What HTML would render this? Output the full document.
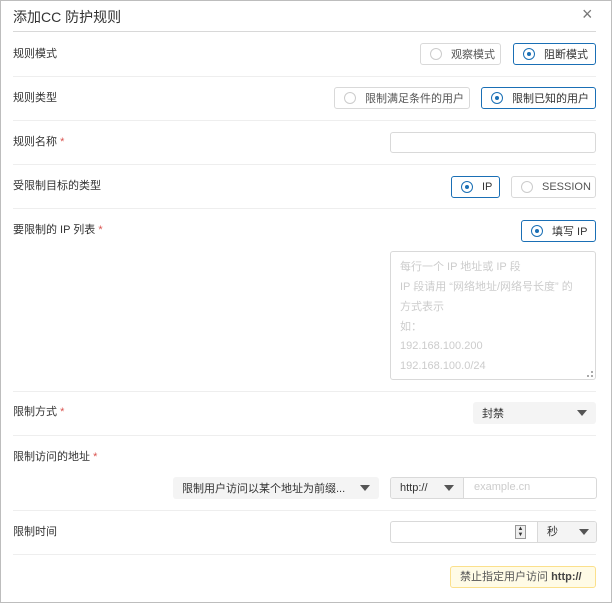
<!DOCTYPE html>
<html><head><meta charset="utf-8"><style>
*{box-sizing:border-box;margin:0;padding:0}
body{width:612px;height:603px;background:#fff;font-family:"Liberation Sans","Noto Sans CJK SC",sans-serif;font-size:11px;color:#333;position:relative;overflow:hidden;white-space:nowrap}
.frame{position:absolute;left:0;top:0;width:612px;height:603px;border:1px solid #bdbdbd}
.a{position:absolute}
.hr{position:absolute;left:13px;width:583px;height:1px;background:#eee}
.lbl{position:absolute;left:13px;line-height:16px}
.req{color:#d9534f}
.rb{position:absolute;height:22px;border:1px solid #d9d9d9;border-radius:3px;display:flex;align-items:center;padding-left:9px;color:#555;background:#fff}
.rb.on{border-color:#1a6fb5;color:#333}
.rb i{display:inline-block;flex:none;width:12px;height:12px;border:1px solid #ccc;border-radius:50%;margin-right:9px;position:relative}
.rb.on i{border-color:#1a6fb5}
.rb.on i:after{content:"";position:absolute;left:3px;top:3px;width:4px;height:4px;border-radius:50%;background:#1a6fb5}
.inp{position:absolute;border:1px solid #d9d9d9;border-radius:3px;background:#fff}
.sel{position:absolute;background:#f4f4f4;border-radius:3px;display:flex;align-items:center;padding-left:9px;color:#333}
.tri{position:absolute;right:9px;top:8px;width:0;height:0;border-left:5px solid transparent;border-right:5px solid transparent;border-top:6px solid #555}
.ph{position:absolute;left:9px;color:#ccc;font-size:11px;line-height:14px}
</style></head><body>
<div class="frame"></div>
<div class="a" style="left:13px;top:7px;font-size:14px;color:#333">添加CC 防护规则</div>
<div class="a" style="left:582px;top:4px;font-size:18px;color:#777;font-weight:300">×</div>
<div class="hr" style="top:31px;background:#d8d8d8"></div>

<div class="lbl" style="top:46px">规则模式</div>
<div class="rb" style="left:420px;top:43px;width:81px"><i></i>观察模式</div>
<div class="rb on" style="left:513px;top:43px;width:83px"><i></i>阻断模式</div>
<div class="hr" style="top:76px"></div>

<div class="lbl" style="top:90px">规则类型</div>
<div class="rb" style="left:334px;top:87px;width:136px"><i></i>限制满足条件的用户</div>
<div class="rb on" style="left:481px;top:87px;width:115px"><i></i>限制已知的用户</div>
<div class="hr" style="top:120px"></div>

<div class="lbl" style="top:134px">规则名称 <span class="req">*</span></div>
<div class="inp" style="left:390px;top:132px;width:206px;height:21px"></div>
<div class="hr" style="top:164px"></div>

<div class="lbl" style="top:178px">受限制目标的类型</div>
<div class="rb on" style="left:451px;top:176px;width:49px"><i></i>IP</div>
<div class="rb" style="left:511px;top:176px;width:85px;font-size:11px"><i></i>SESSION</div>
<div class="hr" style="top:208px"></div>

<div class="lbl" style="top:222px">要限制的 IP 列表 <span class="req">*</span></div>
<div class="rb on" style="left:521px;top:220px;width:75px"><i></i>填写 IP</div>
<div class="inp" style="left:390px;top:251px;width:206px;height:129px">
<div class="ph" style="top:8px">每行一个 IP 地址或 IP 段</div>
<div class="ph" style="top:28px">IP 段请用 “网络地址/网络号长度” 的</div>
<div class="ph" style="top:48px">方式表示</div>
<div class="ph" style="top:68px">如：</div>
<div class="ph" style="top:87px">192.168.100.200</div>
<div class="ph" style="top:107px">192.168.100.0/24</div>
<div class="a" style="right:2px;bottom:2px;width:6px;height:6px;border-right:2px dotted #aaa;border-bottom:2px dotted #aaa"></div>
</div>
<div class="hr" style="top:391px"></div>

<div class="lbl" style="top:404px">限制方式 <span class="req">*</span></div>
<div class="sel" style="left:473px;top:402px;width:123px;height:22px">封禁<span class="tri"></span></div>
<div class="hr" style="top:435px"></div>

<div class="lbl" style="top:449px">限制访问的地址 <span class="req">*</span></div>
<div class="sel" style="left:173px;top:477px;width:206px;height:22px">限制用户访问以某个地址为前缀...<span class="tri"></span></div>
<div class="inp" style="left:390px;top:477px;width:207px;height:22px;overflow:hidden">
<div class="a" style="left:0;top:0;width:73px;height:20px;background:#f4f4f4;border-right:1px solid #d9d9d9;padding-left:9px;line-height:20px">http://<span class="tri" style="top:7px"></span></div>
<div class="a" style="left:83px;top:3px;color:#ccc">example.cn</div>
</div>
<div class="hr" style="top:510px"></div>

<div class="lbl" style="top:524px">限制时间</div>
<div class="inp" style="left:390px;top:521px;width:207px;height:22px;overflow:hidden">
<div class="a" style="left:124px;top:3px;width:11px;height:14px;border:1px solid #999;background:#eee;font-size:6px;line-height:6px;text-align:center">▲<br>▼</div>
<div class="a" style="left:146px;top:0;width:61px;height:20px;background:#f4f4f4;border-left:1px solid #d9d9d9;padding-left:9px;line-height:20px">秒<span class="tri" style="top:7px"></span></div>
</div>
<div class="hr" style="top:554px"></div>

<div class="a" style="left:450px;top:566px;width:146px;height:22px;background:#fffbe6;border:1px solid #fbe08c;border-radius:3px;line-height:20px;padding-left:9px;color:#555">禁止指定用户访问 <b style="color:#444">http://</b></div>
</body></html>
